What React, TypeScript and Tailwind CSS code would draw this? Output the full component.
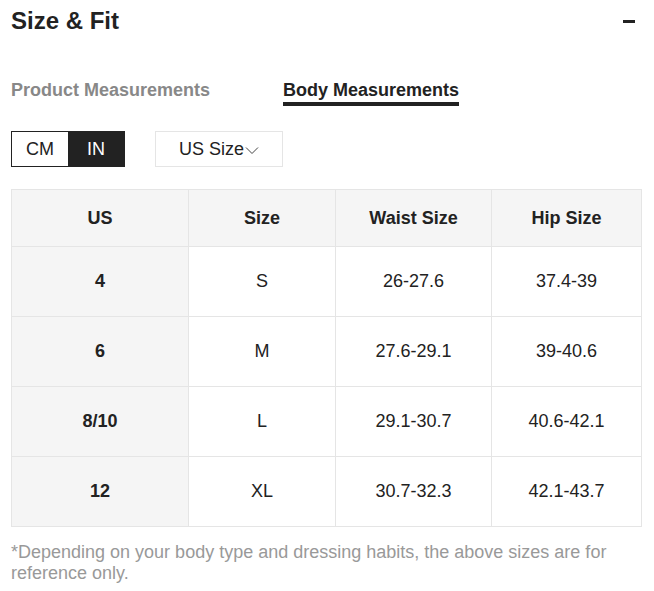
const rows = [
  { us: "4", size: "S", waist: "26-27.6", hip: "37.4-39" },
  { us: "6", size: "M", waist: "27.6-29.1", hip: "39-40.6" },
  { us: "8/10", size: "L", waist: "29.1-30.7", hip: "40.6-42.1" },
  { us: "12", size: "XL", waist: "30.7-32.3", hip: "42.1-43.7" },
];

export default function App() {
  return (
    <div className="w-[654px] h-[591px] bg-white px-[11px] font-['Liberation_Sans',Arial,sans-serif] text-[#222]">
      {/* header */}
      <div className="flex h-[42px] items-center justify-between">
        <h2 className="text-[24px] font-bold leading-none">Size &amp; Fit</h2>
        <div className="mr-[8px] h-[3px] w-[12px] bg-[#222]" />
      </div>

      {/* tabs */}
      <div className="mt-[37px] flex gap-[73px] text-[18px] font-bold leading-[22px]">
        <div className="text-[#888]">Product Measurements</div>
        <div className="flex flex-col">
          <span>Body Measurements</span>
          <div className="mt-[1px] h-[4px] bg-[#222]" />
        </div>
      </div>

      {/* unit + size selectors */}
      <div className="mt-[25px] flex items-center gap-[30px] text-[18px]">
        <div className="flex h-[36px] border border-[#222]">
          <div className="flex w-[56px] items-center justify-center bg-white">CM</div>
          <div className="flex w-[56px] items-center justify-center bg-[#222] text-white">IN</div>
        </div>
        <div className="flex h-[36px] w-[128px] items-center justify-center border border-[#e5e5e5]">
          US Size
          <svg width="14" height="9" viewBox="0 0 14 9" className="ml-[1px] mt-[3px]">
            <path d="M1 1.5l6 6 6-6" fill="none" stroke="#444" strokeWidth="1" />
          </svg>
        </div>
      </div>

      {/* table */}
      <table className="mt-[22px] w-[630px] table-fixed border-collapse text-[18px]">
        <colgroup>
          <col className="w-[177px]" />
          <col className="w-[147px]" />
          <col className="w-[156px]" />
          <col className="w-[150px]" />
        </colgroup>
        <thead>
          <tr className="h-[57px] bg-[#f5f5f5] font-bold">
            <th className="border border-[#e5e5e5]">US</th>
            <th className="border border-[#e5e5e5]">Size</th>
            <th className="border border-[#e5e5e5]">Waist Size</th>
            <th className="border border-[#e5e5e5]">Hip Size</th>
          </tr>
        </thead>
        <tbody>
          {rows.map((r) => (
            <tr key={r.us} className="h-[70px] text-center">
              <td className="border border-[#e5e5e5] bg-[#f5f5f5] font-bold">{r.us}</td>
              <td className="border border-[#e5e5e5]">{r.size}</td>
              <td className="border border-[#e5e5e5]">{r.waist}</td>
              <td className="border border-[#e5e5e5]">{r.hip}</td>
            </tr>
          ))}
        </tbody>
      </table>

      <p className="mt-[15px] text-[18px] leading-[21px] text-[#999]">
        *Depending on your body type and dressing habits, the above sizes are for reference only.
      </p>
    </div>
  );
}
